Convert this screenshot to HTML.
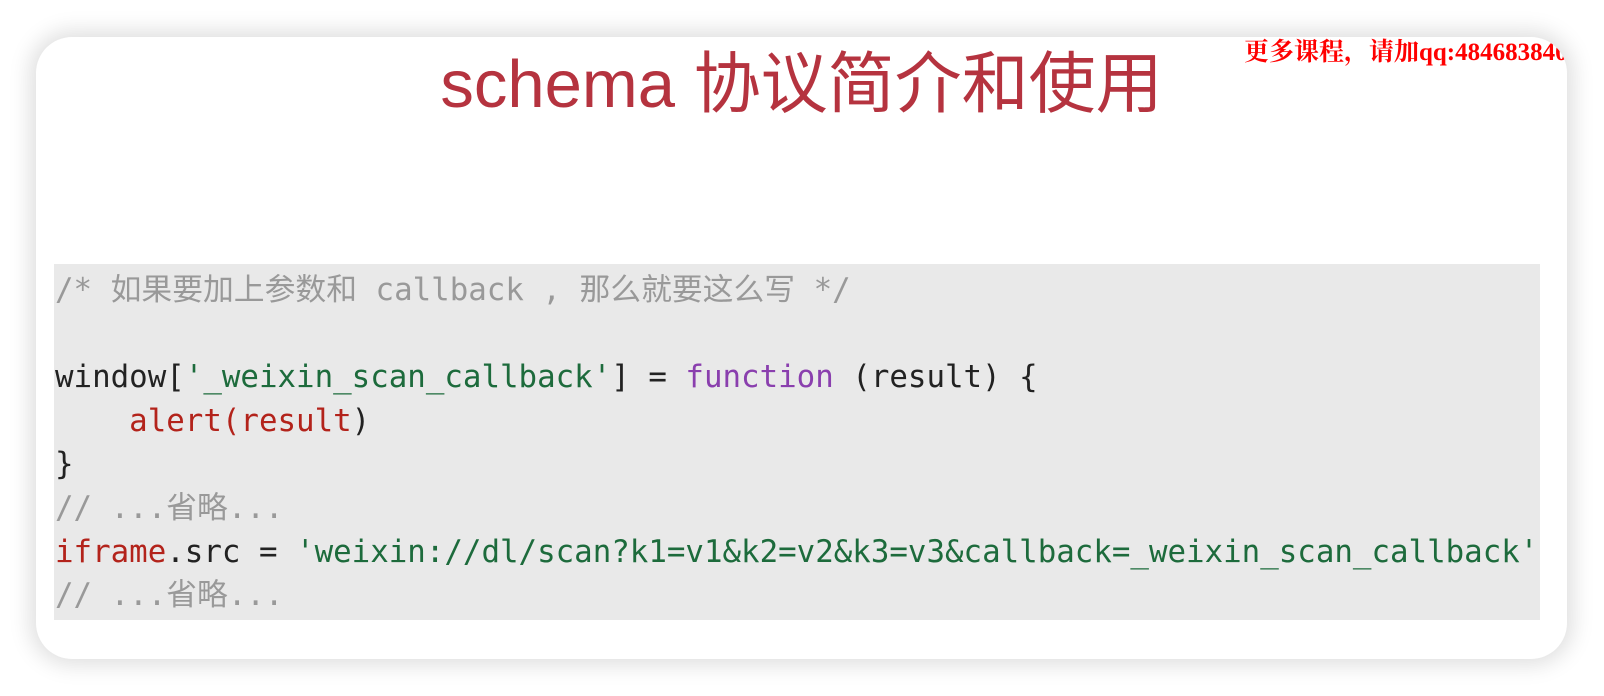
<!DOCTYPE html>
<html><head><meta charset="utf-8"><style>
html,body{margin:0;padding:0;width:1604px;height:696px;background:#fff;overflow:hidden}
.card{position:absolute;left:36px;top:37px;width:1531px;height:622px;background:#fff;border-radius:36px;box-shadow:0 0 22px 6px rgba(0,0,0,0.13);overflow:hidden}
.title{position:absolute;left:0;width:100%;top:10px;text-align:center;font-family:"Liberation Sans","Noto Sans CJK SC",sans-serif;font-size:67px;line-height:76px;color:#b5333f}
.wm{position:absolute;left:1208px;top:1px;white-space:nowrap;font-family:"Liberation Serif","Noto Serif CJK SC",serif;font-weight:bold;font-size:25px;line-height:30px;color:#f00}
.code{position:absolute;left:18px;top:227px;width:1486px;height:356px;background:#e9e9e9}
pre{margin:0;padding:5px 0 0 1px;font-family:"DejaVu Sans Mono","Noto Sans CJK SC",monospace;font-size:30.8px;line-height:43.6px;color:#222;white-space:pre}
.c{color:#999}.s{color:#1d6b3c}.k{color:#8a3fae}.r{color:#b3231b}
</style></head><body>
<div class="card">
<div class="title">schema 协议简介和使用</div>
<div class="wm">更多课程，请加qq:484683840</div>
<div class="code"><pre><span class="c">/* 如果要加上参数和 callback , 那么就要这么写 */</span>

window[<span class="s">'_weixin_scan_callback'</span>] = <span class="k">function</span> (result) {
    <span class="r">alert(result</span>)
}
<span class="c">// ...省略...</span>
<span class="r">iframe</span>.src = <span class="s">'weixin://dl/scan?k1=v1&amp;k2=v2&amp;k3=v3&amp;callback=_weixin_scan_callback'</span>
<span class="c">// ...省略...</span></pre></div>
</div>
</body></html>
